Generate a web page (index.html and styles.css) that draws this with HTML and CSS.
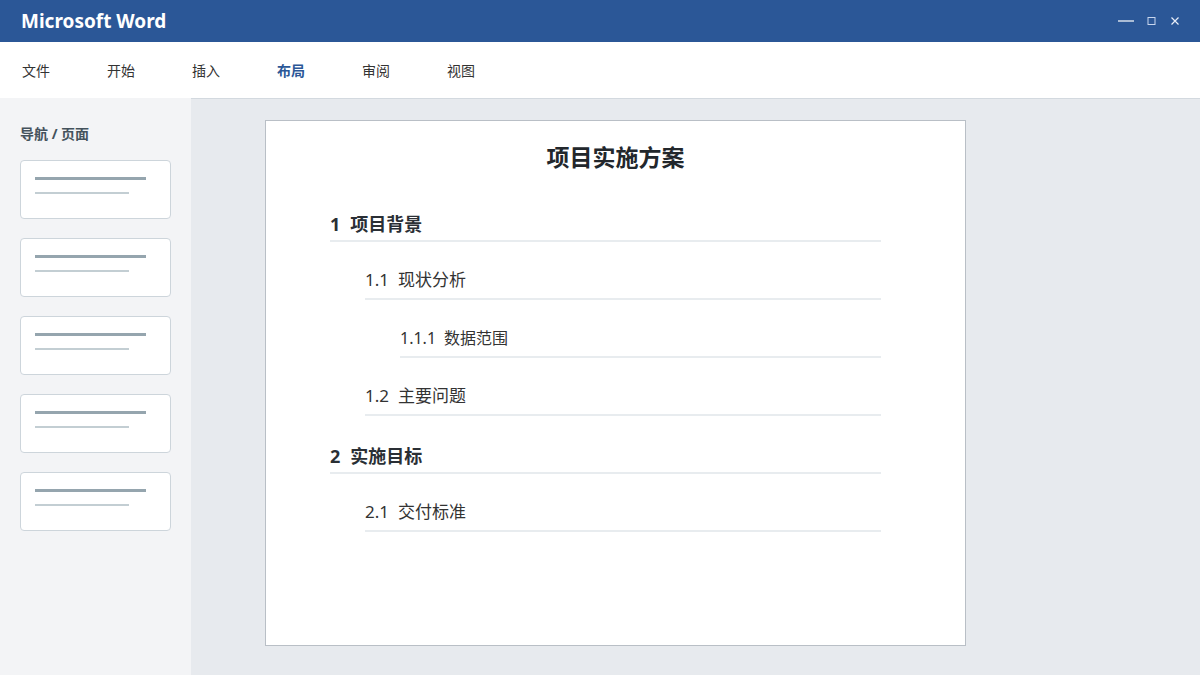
FILE: index.html
```html
<!DOCTYPE html>
<html lang="zh-CN">
<head>
    <meta charset="UTF-8">
    <title>Microsoft Word</title>
    <link rel="stylesheet" href="styles.css">
</head>
<body>
    <div class="titlebar">
        <div class="app-name">Microsoft Word</div>
        <div class="win-controls">
            <svg width="16" height="10" viewBox="0 0 16 10"><line x1="0" y1="5" x2="16" y2="5" stroke="#fff" stroke-width="1.2"/></svg>
            <svg width="10" height="10" viewBox="0 0 10 10"><rect x="1" y="1.5" width="7" height="7" fill="none" stroke="#c8d6ee" stroke-width="1"/></svg>
            <svg width="10" height="10" viewBox="0 0 10 10"><path d="M1.5 1.5 L8.5 8.5 M8.5 1.5 L1.5 8.5" stroke="#e8eef8" stroke-width="1.2"/></svg>
        </div>
    </div>

    <div class="menubar">
        <span class="menu-item">文件</span>
        <span class="menu-item">开始</span>
        <span class="menu-item">插入</span>
        <span class="menu-item active">布局</span>
        <span class="menu-item">审阅</span>
        <span class="menu-item">视图</span>
    </div>

    <div class="workspace">
        <div class="sidebar">
            <div class="sidebar-title">导航 / 页面</div>
            <div class="thumbs">
                <div class="thumb"><div class="line-a"></div><div class="line-b"></div></div>
                <div class="thumb"><div class="line-a"></div><div class="line-b"></div></div>
                <div class="thumb"><div class="line-a"></div><div class="line-b"></div></div>
                <div class="thumb"><div class="line-a"></div><div class="line-b"></div></div>
                <div class="thumb"><div class="line-a"></div><div class="line-b"></div></div>
            </div>
        </div>

        <div class="main">
            <div class="page">
                <h1 class="doc-title">项目实施方案</h1>
                <div class="toc">
                    <div class="entry level-1"><span class="num">1</span>项目背景</div>
                    <div class="entry level-2"><span class="num">1.1</span>现状分析</div>
                    <div class="entry level-3"><span class="num">1.1.1</span>数据范围</div>
                    <div class="entry level-2"><span class="num">1.2</span>主要问题</div>
                    <div class="entry level-1"><span class="num">2</span>实施目标</div>
                    <div class="entry level-2"><span class="num">2.1</span>交付标准</div>
                </div>
            </div>
        </div>
    </div>
</body>
</html>
```

FILE: styles.css
```css
* {
    box-sizing: border-box;
}
body {
    margin: 0;
    width: 1200px;
    height: 675px;
    overflow: hidden;
    font-family: "Noto Sans", "Noto Sans CJK SC", sans-serif;
    color: #333;
    display: flex;
    flex-direction: column;
}
.titlebar {
    height: 42px;
    background-color: #2b5797;
    display: flex;
    align-items: center;
    justify-content: space-between;
    padding: 0 20px 0 21px;
}
.app-name {
    color: #fff;
    font-weight: bold;
    font-size: 19px;
}
.win-controls {
    display: flex;
    align-items: center;
    gap: 13px;
}
.menubar {
    height: 56px;
    background-color: #fff;
    display: flex;
    align-items: center;
    gap: 57px;
    padding-left: 22px;
}
.menu-item {
    font-size: 14px;
    color: #333;
}
.menu-item.active {
    color: #2b5797;
    font-weight: bold;
}
.workspace {
    flex: 1;
    display: flex;
}
.sidebar {
    width: 191px;
    background-color: #f3f4f6;
    padding: 27px 20px 0 20px;
}
.sidebar-title {
    font-size: 14px;
    font-weight: bold;
    color: #44525c;
    line-height: 18px;
    margin-bottom: 17px;
}
.thumbs {
    display: flex;
    flex-direction: column;
    gap: 19px;
}
.thumb {
    width: 151px;
    height: 59px;
    background-color: #fff;
    border: 1px solid #cdd5db;
    border-radius: 4px;
    padding: 16px 0 0 14px;
}
.line-a {
    width: 111px;
    height: 3px;
    background-color: #95a5ae;
}
.line-b {
    width: 94px;
    height: 2px;
    background-color: #c3ced3;
    margin-top: 12px;
}
.main {
    flex: 1;
    background-color: #e7eaee;
    border-top: 1px solid #d3d9df;
    padding: 21px 0 0 74px;
}
.page {
    width: 701px;
    height: 526px;
    background-color: #fff;
    border: 1px solid #b9bfc6;
    padding: 21px 84px 0 64px;
}
.doc-title {
    margin: 0 -84px 0 -64px;
    text-align: center;
    font-size: 23px;
    line-height: 30px;
    font-weight: bold;
    color: #22272c;
}
.toc {
    margin-top: 12px;
}
.entry {
    height: 58px;
    display: flex;
    align-items: flex-end;
    border-bottom: 2px solid #e8ecef;
    line-height: 24px;
    color: #333;
}
.entry .num {
    margin-right: 9px;
}
.level-1 {
    font-size: 18px;
    font-weight: bold;
    color: #2a2f35;
    padding-bottom: 4px;
}
.level-1 .num {
    margin-right: 10px;
}
.level-2 {
    font-size: 17px;
    margin-left: 35px;
    padding-bottom: 6px;
}
.level-3 {
    font-size: 16px;
    margin-left: 70px;
    padding-bottom: 6px;
}
.level-3 .num {
    margin-right: 8px;
}
```
